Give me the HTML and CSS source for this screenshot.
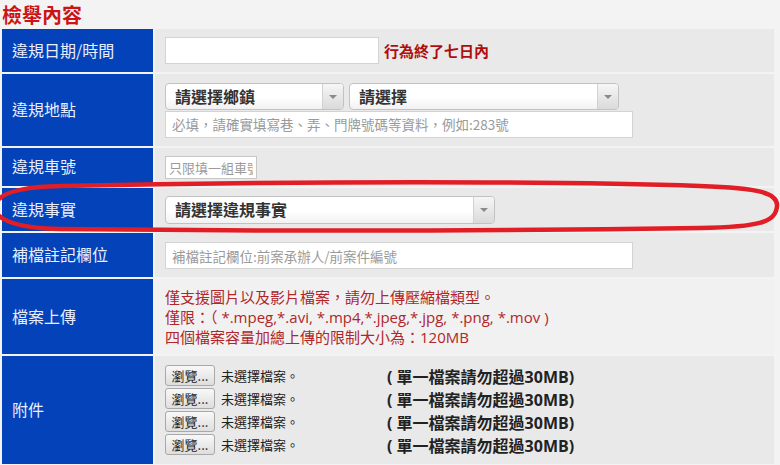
FILE: index.html
```html
<!DOCTYPE html>
<html lang="zh-Hant">
<head>
<meta charset="utf-8">
<title>檢舉內容</title>
<link rel="stylesheet" href="styles.css">
</head>
<body>
<div class="page">
  <h1 class="title">檢舉內容</h1>
  <div class="form">
    <div class="label">違規日期/時間</div>
    <div class="cell row-center">
      <input class="txt w-date" type="text">
      <span class="hint">行為終了七日內</span>
    </div>

    <div class="label">違規地點</div>
    <div class="cell col-center">
      <div class="sel-row">
        <div class="sel w-town"><span class="sel-text">請選擇鄉鎮</span><span class="sel-arrow"></span></div>
        <div class="sel w-road"><span class="sel-text">請選擇</span><span class="sel-arrow"></span></div>
      </div>
      <input class="txt w-long" type="text" placeholder="必填，請確實填寫巷、弄、門牌號碼等資料，例如:283號">
    </div>

    <div class="label">違規車號</div>
    <div class="cell row-center">
      <input class="txt w-plate" type="text" placeholder="只限填一組車號">
    </div>

    <div class="label">違規事實</div>
    <div class="cell row-center">
      <div class="sel w-fact"><span class="sel-text">請選擇違規事實</span><span class="sel-arrow"></span></div>
    </div>

    <div class="label">補檔註記欄位</div>
    <div class="cell row-center">
      <input class="txt w-long" type="text" placeholder="補檔註記欄位:前案承辦人/前案件編號">
    </div>

    <div class="label">檔案上傳</div>
    <div class="cell col-center light">
      <p class="note">僅支援圖片以及影片檔案，請勿上傳壓縮檔類型。</p>
      <p class="note">僅限：（ *.mpeg,*.avi, *.mp4,*.jpeg,*.jpg, *.png, *.mov )</p>
      <p class="note">四個檔案容量加總上傳的限制大小為：120MB</p>
    </div>

    <div class="label">附件</div>
    <div class="cell col-center files">
      <div class="file-row"><span class="file"><span class="browse">瀏覽...</span><span class="nofile">未選擇檔案。</span></span><span class="limit">( 單一檔案請勿超過30MB)</span></div>
      <div class="file-row"><span class="file"><span class="browse">瀏覽...</span><span class="nofile">未選擇檔案。</span></span><span class="limit">( 單一檔案請勿超過30MB)</span></div>
      <div class="file-row"><span class="file"><span class="browse">瀏覽...</span><span class="nofile">未選擇檔案。</span></span><span class="limit">( 單一檔案請勿超過30MB)</span></div>
      <div class="file-row"><span class="file"><span class="browse">瀏覽...</span><span class="nofile">未選擇檔案。</span></span><span class="limit">( 單一檔案請勿超過30MB)</span></div>
    </div>
  </div>
  <svg class="mark" width="780" height="465" viewBox="0 0 780 465" aria-hidden="true">
    <path d="M 60 186 C 300 181 560 181 700 186 C 760 188 778 193 777 206 C 776 222 760 227 700 228 C 500 231 250 231 60 229 C 8 228 -6 216 -5 207 C -4 195 14 187 60 186 Z" fill="none" stroke="#e11d25" stroke-width="4.5"/>
  </svg>
</div>
</body>
</html>
```

FILE: styles.css
```css
* { box-sizing: border-box; }

html, body {
  margin: 0;
  padding: 0;
  background: #f3f3f3;
}

body {
  font-family: "Noto Sans CJK TC", "Open Sans", sans-serif;
  color: #222;
}

.page {
  position: relative;
  width: 780px;
  height: 465px;
  overflow: hidden;
}

.title {
  margin: 0;
  height: 29px;
  line-height: 30px;
  padding-left: 2px;
  font-size: 20px;
  font-weight: 700;
  color: #cc1414;
}

.form {
  display: grid;
  grid-template-columns: 151px 619px;
  grid-template-rows: 43px 72px 38px 43px 44px 75px 108px;
  gap: 2px;
  margin-left: 2px;
}

.label {
  background: #0342b8;
  color: #e9eeff;
  font-size: 16px;
  padding-left: 10px;
  padding-bottom: 2px;
  display: flex;
  align-items: center;
}

.cell {
  background: #e9e9e9;
  padding-left: 10px;
}

.cell.light {
  background: #f1f1f1;
}

.row-center {
  display: flex;
  align-items: center;
}

.col-center {
  display: flex;
  flex-direction: column;
  justify-content: center;
}

.txt {
  display: block;
  margin: 0;
  height: 27px;
  border: 1px solid #d3d3d3;
  background: #fff;
  padding: 0 6px;
  font-family: "Noto Sans CJK TC", sans-serif;
  font-size: 13.5px;
  color: #333;
  outline: none;
}

.txt::placeholder {
  color: #9a9a9a;
}

.w-date { width: 214px; }
.w-long { width: 468px; margin-top: 1px; }
.w-plate { width: 92px; height: 23px; padding: 0 3px; font-size: 13px; border-color: #c6c6c6; }

.hint {
  margin-left: 5px;
  font-size: 15px;
  font-weight: 700;
  color: #b00d0d;
}

.sel-row {
  display: flex;
  gap: 5px;
}

.sel {
  display: flex;
  height: 27px;
  border: 1px solid #c2c2c2;
  border-radius: 4px;
  background: linear-gradient(#ffffff 55%, #f1f1f1);
  overflow: hidden;
}

.w-town { width: 179px; }
.w-road { width: 270px; }
.w-fact { width: 330px; height: 28px; }

.sel-text {
  flex: 1;
  padding-left: 9px;
  font-size: 16px;
  font-weight: 700;
  color: #333;
  line-height: 25px;
  white-space: nowrap;
}

.sel-arrow {
  width: 21px;
  border-left: 1px solid #d2d2d2;
  background: linear-gradient(#f6f6f6, #dadada);
  position: relative;
}

.sel-arrow::after {
  content: "";
  position: absolute;
  left: 6px;
  top: 11px;
  border-left: 4px solid transparent;
  border-right: 4px solid transparent;
  border-top: 4px solid #8a8a8a;
}

.note {
  margin: 0;
  font-family: "Open Sans", "Noto Sans CJK TC", sans-serif;
  font-size: 15px;
  line-height: 20px;
  color: #b0262a;
  white-space: nowrap;
}

.files {
  gap: 1px;
}

.file-row {
  display: flex;
  align-items: center;
  height: 22px;
}

.file {
  display: flex;
  align-items: center;
  width: 222px;
}

.browse {
  width: 50px;
  height: 21px;
  border: 1px solid #a8a8a8;
  border-radius: 3px;
  background: linear-gradient(#f8f8f8, #dedede);
  font-size: 13px;
  line-height: 19px;
  text-align: center;
  color: #222;
}

.nofile {
  margin-left: 6px;
  font-size: 13px;
  color: #222;
}

.limit {
  font-family: "Open Sans", "Noto Sans CJK TC", sans-serif;
  font-size: 16px;
  font-weight: 700;
  color: #222;
  white-space: nowrap;
}

.mark {
  position: absolute;
  left: 0;
  top: 0;
  pointer-events: none;
}
```
